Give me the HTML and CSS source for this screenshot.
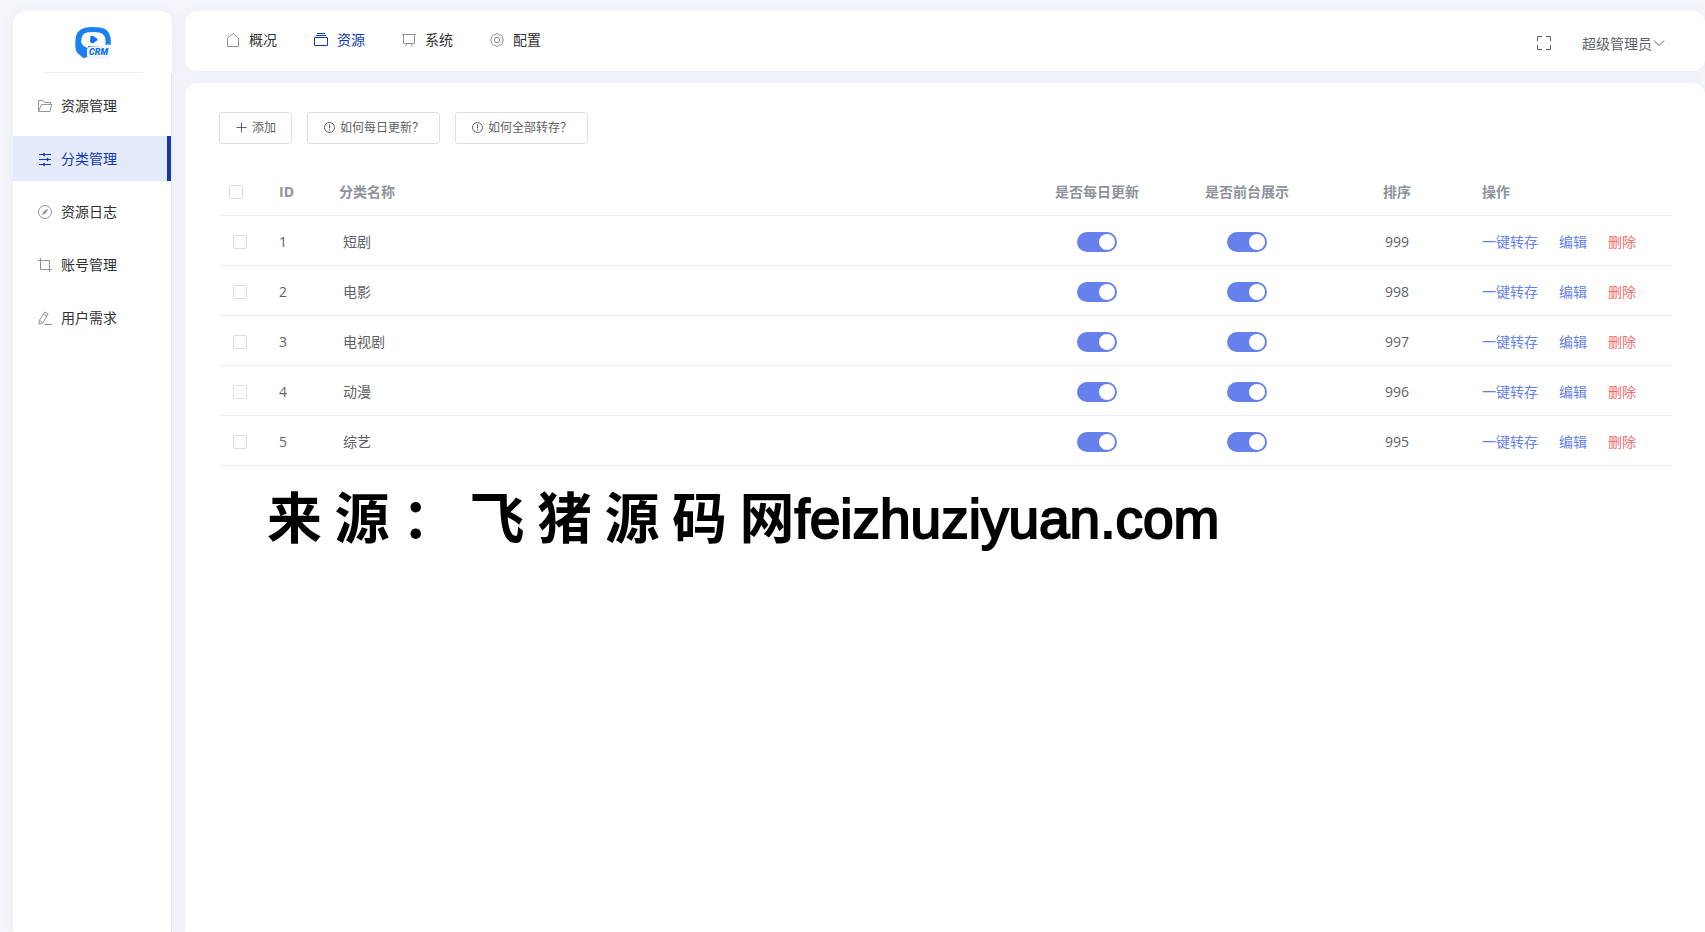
FILE: index.html
```html
<!DOCTYPE html>
<html lang="zh-CN">
<head>
    <meta charset="UTF-8">
    <meta name="viewport" content="width=device-width, initial-scale=1.0">
    <title>分类管理</title>
    <link rel="stylesheet" href="styles.css">
</head>
<body>
    <aside class="sidebar">
        <div class="logo">
            <svg width="36" height="34" viewBox="0 0 36 34">
                <path d="M11 0.600Q18-.4 25 .6Q34 2 35.400 10Q36.400 17 35 22L12 30L9.500 31Q8 31.200 6.500 29.500L2 25.500Q0 23 .3 14Q.6 2.500 11 .6Z" fill="#1e80f0"/>
                <path d="M12 5.500Q18 4.500 24 5.500Q30 6.500 30.500 13V19H13V21Q7 19.500 6.200 15Q6 6.800 12 5.500Z" fill="#fff"/>
                <path d="M15.500 9.500Q16 8.500 18 9L22 11.500Q23 12.500 22 13.500L18.500 16Q15.500 17 15 14.500Z" fill="#1273ee"/>
                <path d="M12 23Q12 19.500 17 19.500L27 19Q32 16.500 36 18V28Q35 32 30 32H17Q12 32 12 28Z" fill="#f3f5fc"/>
                <text x="14" y="28" class="logo-text">CRM</text>
            </svg>
        </div>
        <nav class="side-menu">
            <a href="#" class="side-item">
                <svg class="icon" viewBox="0 0 16 16"><path d="M1.500 13.500v-11h4.500l1.500 2h6v2M1.500 13.500h11.500l1.800-7h-10.300z"/></svg>
                资源管理
            </a>
            <a href="#" class="side-item active">
                <svg class="icon" viewBox="0 0 16 16"><path d="M2 3.500h12M2 8.500h12M2 13.500h12"/><path class="fill" d="M5.500 3.500l1.500-2 1.500 2-1.500 2zM9 8.500l1.500-2 1.500 2-1.500 2zM5.500 13.500l1.500-2 1.500 2-1.500 2z"/></svg>
                分类管理
            </a>
            <a href="#" class="side-item">
                <svg class="icon" viewBox="0 0 16 16"><circle cx="8" cy="8" r="6.500"/><path class="fill" d="M11.500 4.500L9 9l-4.500 2.500L7 7z"/></svg>
                资源日志
            </a>
            <a href="#" class="side-item">
                <svg class="icon" viewBox="0 0 16 16"><path d="M3.500 1v11.500H15M1 3.500h11.500V15"/></svg>
                账号管理
            </a>
            <a href="#" class="side-item">
                <svg class="icon" viewBox="0 0 16 16"><path d="M7.800 2l3.400 2-5.500 8.800-3.700 1.400.4-3.900zM6.500 4.200l3.400 2M2.400 10.300l3.300 2.500M7.500 14.500H15"/></svg>
                用户需求
            </a>
        </nav>
    </aside>

    <div class="container">
        <header class="header">
            <nav class="top-nav">
                <a href="#" class="nav-item">
                    <svg class="icon" viewBox="0 0 16 16"><path d="M2.500 14.500V6L8 1.500 13.500 6v8.500z"/></svg>
                    概况
                </a>
                <a href="#" class="nav-item active">
                    <svg class="icon" viewBox="0 0 16 16"><path d="M1.500 5.500h13v8h-13zM3 3.500h10M4 1.500h8"/></svg>
                    资源
                </a>
                <a href="#" class="nav-item">
                    <svg class="icon" viewBox="0 0 16 16"><path d="M1 2.500h14M2.500 2.500v9h11v-9M6 11.500l-1.500 3M10 11.500l1.500 3"/></svg>
                    系统
                </a>
                <a href="#" class="nav-item">
                    <svg class="icon" viewBox="0 0 16 16"><path d="M13.200 5.900Q16 8 13.200 10.100Q13.700 13.700 10.100 13.200Q8 16 5.900 13.200Q2.300 13.700 2.800 10.100Q0 8 2.800 5.900Q2.300 2.300 5.900 2.800Q8 0 10.100 2.800Q13.700 2.300 13.200 5.900z"/><circle cx="8" cy="8" r="2.700"/></svg>
                    配置
                </a>
            </nav>
            <div class="user-bar">
                <button type="button" class="plain-btn" aria-label="全屏">
                    <svg class="icon" viewBox="0 0 16 16"><path d="M1.500 6V1.500H6M10 1.500h4.500V6M14.500 10v4.500H10M6 14.500H1.500V10"/></svg>
                </button>
                <button type="button" class="plain-btn">
                    超级管理员
                    <svg class="arrow" viewBox="0 0 14 14"><path d="M2 4.500l5 5 5-5"/></svg>
                </button>
            </div>
        </header>

        <main class="content">
            <div class="toolbar">
                <button type="button" class="btn">
                    <svg class="btn-icon" viewBox="0 0 12 12"><path d="M6.500 1.500v10M1.500 6.500h10"/></svg>
                    添加
                </button>
                <button type="button" class="btn">
                    <svg class="btn-icon" viewBox="0 0 12 12"><circle cx="6.500" cy="6.500" r="5"/><path d="M6.500 3.500v4M6.500 8.500v1"/></svg>
                    如何每日更新？
                </button>
                <button type="button" class="btn">
                    <svg class="btn-icon" viewBox="0 0 12 12"><circle cx="6.500" cy="6.500" r="5"/><path d="M6.500 3.500v4M6.500 8.500v1"/></svg>
                    如何全部转存？
                </button>
            </div>

            <table class="table">
                <thead>
                    <tr>
                        <th class="col-check"><input type="checkbox" class="checkbox" aria-label="全选"></th>
                        <th class="col-id">ID</th>
                        <th class="col-name">分类名称</th>
                        <th class="col-center">是否每日更新</th>
                        <th class="col-center">是否前台展示</th>
                        <th class="col-center">排序</th>
                        <th class="col-actions">操作</th>
                    </tr>
                </thead>
                <tbody>
                    <tr>
                        <td class="col-check"><input type="checkbox" class="checkbox" aria-label="选择短剧"></td>
                        <td class="col-id">1</td>
                        <td class="col-name">短剧</td>
                        <td class="col-center"><input type="checkbox" class="switch" aria-label="是否每日更新" checked></td>
                        <td class="col-center"><input type="checkbox" class="switch" aria-label="是否前台展示" checked></td>
                        <td class="col-center">999</td>
                        <td class="col-actions"><div class="actions"><a href="#">一键转存</a><a href="#">编辑</a><a href="#" class="danger">删除</a></div></td>
                    </tr>
                    <tr>
                        <td class="col-check"><input type="checkbox" class="checkbox" aria-label="选择电影"></td>
                        <td class="col-id">2</td>
                        <td class="col-name">电影</td>
                        <td class="col-center"><input type="checkbox" class="switch" aria-label="是否每日更新" checked></td>
                        <td class="col-center"><input type="checkbox" class="switch" aria-label="是否前台展示" checked></td>
                        <td class="col-center">998</td>
                        <td class="col-actions"><div class="actions"><a href="#">一键转存</a><a href="#">编辑</a><a href="#" class="danger">删除</a></div></td>
                    </tr>
                    <tr>
                        <td class="col-check"><input type="checkbox" class="checkbox" aria-label="选择电视剧"></td>
                        <td class="col-id">3</td>
                        <td class="col-name">电视剧</td>
                        <td class="col-center"><input type="checkbox" class="switch" aria-label="是否每日更新" checked></td>
                        <td class="col-center"><input type="checkbox" class="switch" aria-label="是否前台展示" checked></td>
                        <td class="col-center">997</td>
                        <td class="col-actions"><div class="actions"><a href="#">一键转存</a><a href="#">编辑</a><a href="#" class="danger">删除</a></div></td>
                    </tr>
                    <tr>
                        <td class="col-check"><input type="checkbox" class="checkbox" aria-label="选择动漫"></td>
                        <td class="col-id">4</td>
                        <td class="col-name">动漫</td>
                        <td class="col-center"><input type="checkbox" class="switch" aria-label="是否每日更新" checked></td>
                        <td class="col-center"><input type="checkbox" class="switch" aria-label="是否前台展示" checked></td>
                        <td class="col-center">996</td>
                        <td class="col-actions"><div class="actions"><a href="#">一键转存</a><a href="#">编辑</a><a href="#" class="danger">删除</a></div></td>
                    </tr>
                    <tr>
                        <td class="col-check"><input type="checkbox" class="checkbox" aria-label="选择综艺"></td>
                        <td class="col-id">5</td>
                        <td class="col-name">综艺</td>
                        <td class="col-center"><input type="checkbox" class="switch" aria-label="是否每日更新" checked></td>
                        <td class="col-center"><input type="checkbox" class="switch" aria-label="是否前台展示" checked></td>
                        <td class="col-center">995</td>
                        <td class="col-actions"><div class="actions"><a href="#">一键转存</a><a href="#">编辑</a><a href="#" class="danger">删除</a></div></td>
                    </tr>
                </tbody>
            </table>

            <p class="source">来 源 ： 飞 猪 源 码 网<span class="domain">feizhuziyuan.com</span></p>
        </main>
    </div>
</body>
</html>
```
FILE: styles.css
```css
* {
    box-sizing: border-box;
}

body {
    margin: 0;
    min-height: 100vh;
    padding: 11px 0 0 13px;
    display: flex;
    gap: 13px;
    background: #f5f6fb;
    color: #606266;
    font-family: "Open Sans", "Noto Sans CJK SC", sans-serif;
    font-size: 14px;
    line-height: 20px;
}

a {
    color: inherit;
    text-decoration: none;
}

button {
    font-family: inherit;
    color: inherit;
    cursor: pointer;
}

svg {
    flex: none;
    fill: none;
    stroke: currentColor;
}

.icon {
    width: 16px;
    height: 16px;
    color: #909399;
}

.icon .fill {
    fill: currentColor;
    stroke: none;
}

/* sidebar */
.sidebar {
    display: flex;
    flex-direction: column;
    width: 159px;
    flex: none;
    background: #fff;
    border-radius: 12px 12px 0 0;
    box-shadow: 0 0 16px #e9ebf4;
}

.logo {
    height: 62px;
    margin: 0 29px 0 30px;
    padding-top: 16px;
    border-bottom: 1px solid #ebeef5;
    text-align: center;
}

.logo svg {
    stroke: none;
}

.logo-text {
    font-family: Roboto, sans-serif;
    font-size: 9px;
    font-weight: 900;
    font-style: italic;
    fill: #1273ee;
}

.side-menu {
    flex: 1;
    display: flex;
    flex-direction: column;
    gap: 8px;
    padding-top: 10px;
    border-right: 1px solid #e6e6e6;
}

.side-item {
    display: flex;
    align-items: center;
    gap: 8px;
    height: 45px;
    padding-left: 24px;
    color: #303133;
}

.side-item.active {
    background: #e4eafb;
    border-right: 4px solid #1237b5;
    color: #1237b5;
}

.active .icon {
    color: #1237b5;
}

/* right side */
.container {
    flex: 1;
    min-width: 0;
    display: flex;
    flex-direction: column;
    gap: 12px;
}

.header {
    display: flex;
    justify-content: space-between;
    align-items: flex-start;
    height: 60px;
    padding: 0 39px 0 40px;
    background: #fff;
    border-radius: 12px;
    box-shadow: 0 0 16px #e9ebf4;
}

.top-nav {
    display: flex;
    gap: 36px;
    height: 58px;
}

.nav-item {
    display: flex;
    align-items: center;
    gap: 8px;
    color: #303133;
}

.nav-item.active {
    color: #1237b5;
}

.user-bar {
    display: flex;
    align-items: center;
    gap: 30px;
    height: 63px;
}

.plain-btn {
    display: flex;
    align-items: center;
    padding: 0;
    border: none;
    background: none;
    font-size: 14px;
}

.plain-btn .icon {
    color: #606266;
}

.arrow {
    width: 14px;
    height: 14px;
}

.content {
    flex: 1;
    padding: 29px 33px 0 34px;
    background: #fff;
    border-radius: 12px 12px 0 0;
    box-shadow: 0 0 16px #e9ebf4;
}

.toolbar {
    display: flex;
    gap: 15px;
}

.btn {
    display: flex;
    align-items: center;
    gap: 5px;
    height: 32px;
    padding: 0 15px 2px;
    border: 1px solid #dcdfe6;
    border-radius: 3px;
    background: #fff;
    font-size: 12px;
}

.btn-icon {
    width: 12px;
    height: 12px;
}

/* table */
.table {
    width: 100%;
    margin-top: 26px;
    border-collapse: collapse;
    table-layout: fixed;
}

.table th,
.table td {
    padding: 0 10px;
    border-bottom: 1px solid #ebeef5;
    text-align: left;
}

.table th {
    height: 45px;
    color: #909399;
    font-weight: 700;
}

.table td {
    height: 50px;
    padding-top: 3px;
}

.table .col-check {
    width: 50px;
}

.table td.col-check,
.table td.col-name {
    padding-left: 14px;
}

.table .col-id {
    width: 60px;
}

.table .col-center {
    width: 150px;
    text-align: center;
}

.table .col-actions {
    width: 200px;
}

.checkbox {
    appearance: none;
    display: block;
    width: 14px;
    height: 14px;
    margin: 0;
    border: 1px solid #dcdfe6;
    border-radius: 2px;
    background: #fff;
}

.checkbox:checked {
    background: #6681ec;
}

.switch {
    appearance: none;
    display: block;
    width: 40px;
    height: 20px;
    margin: 0 auto;
    padding: 2px;
    border-radius: 10px;
    background: #dcdfe6;
}

.switch::before {
    content: "";
    display: block;
    width: 16px;
    height: 16px;
    border-radius: 50%;
    background: #fff;
}

.switch:checked {
    background: #6681ec;
}

.switch:checked::before {
    margin-left: auto;
}

.actions {
    display: flex;
    gap: 21px;
    color: #6681ec;
}

.actions .danger {
    color: #f56c6c;
}

.source {
    margin: 0;
    padding: 8px 48px;
    color: #000;
    font-family: "Noto Sans CJK SC", sans-serif;
    font-size: 55px;
    font-weight: 700;
    line-height: 80px;
}

/* rounder, lighter latin letters next to the bold characters */
.domain {
    font-family: "Liberation Sans", sans-serif;
    font-weight: 400;
    -webkit-text-stroke: 2px #000;
    stroke-linejoin: round;
}
```
